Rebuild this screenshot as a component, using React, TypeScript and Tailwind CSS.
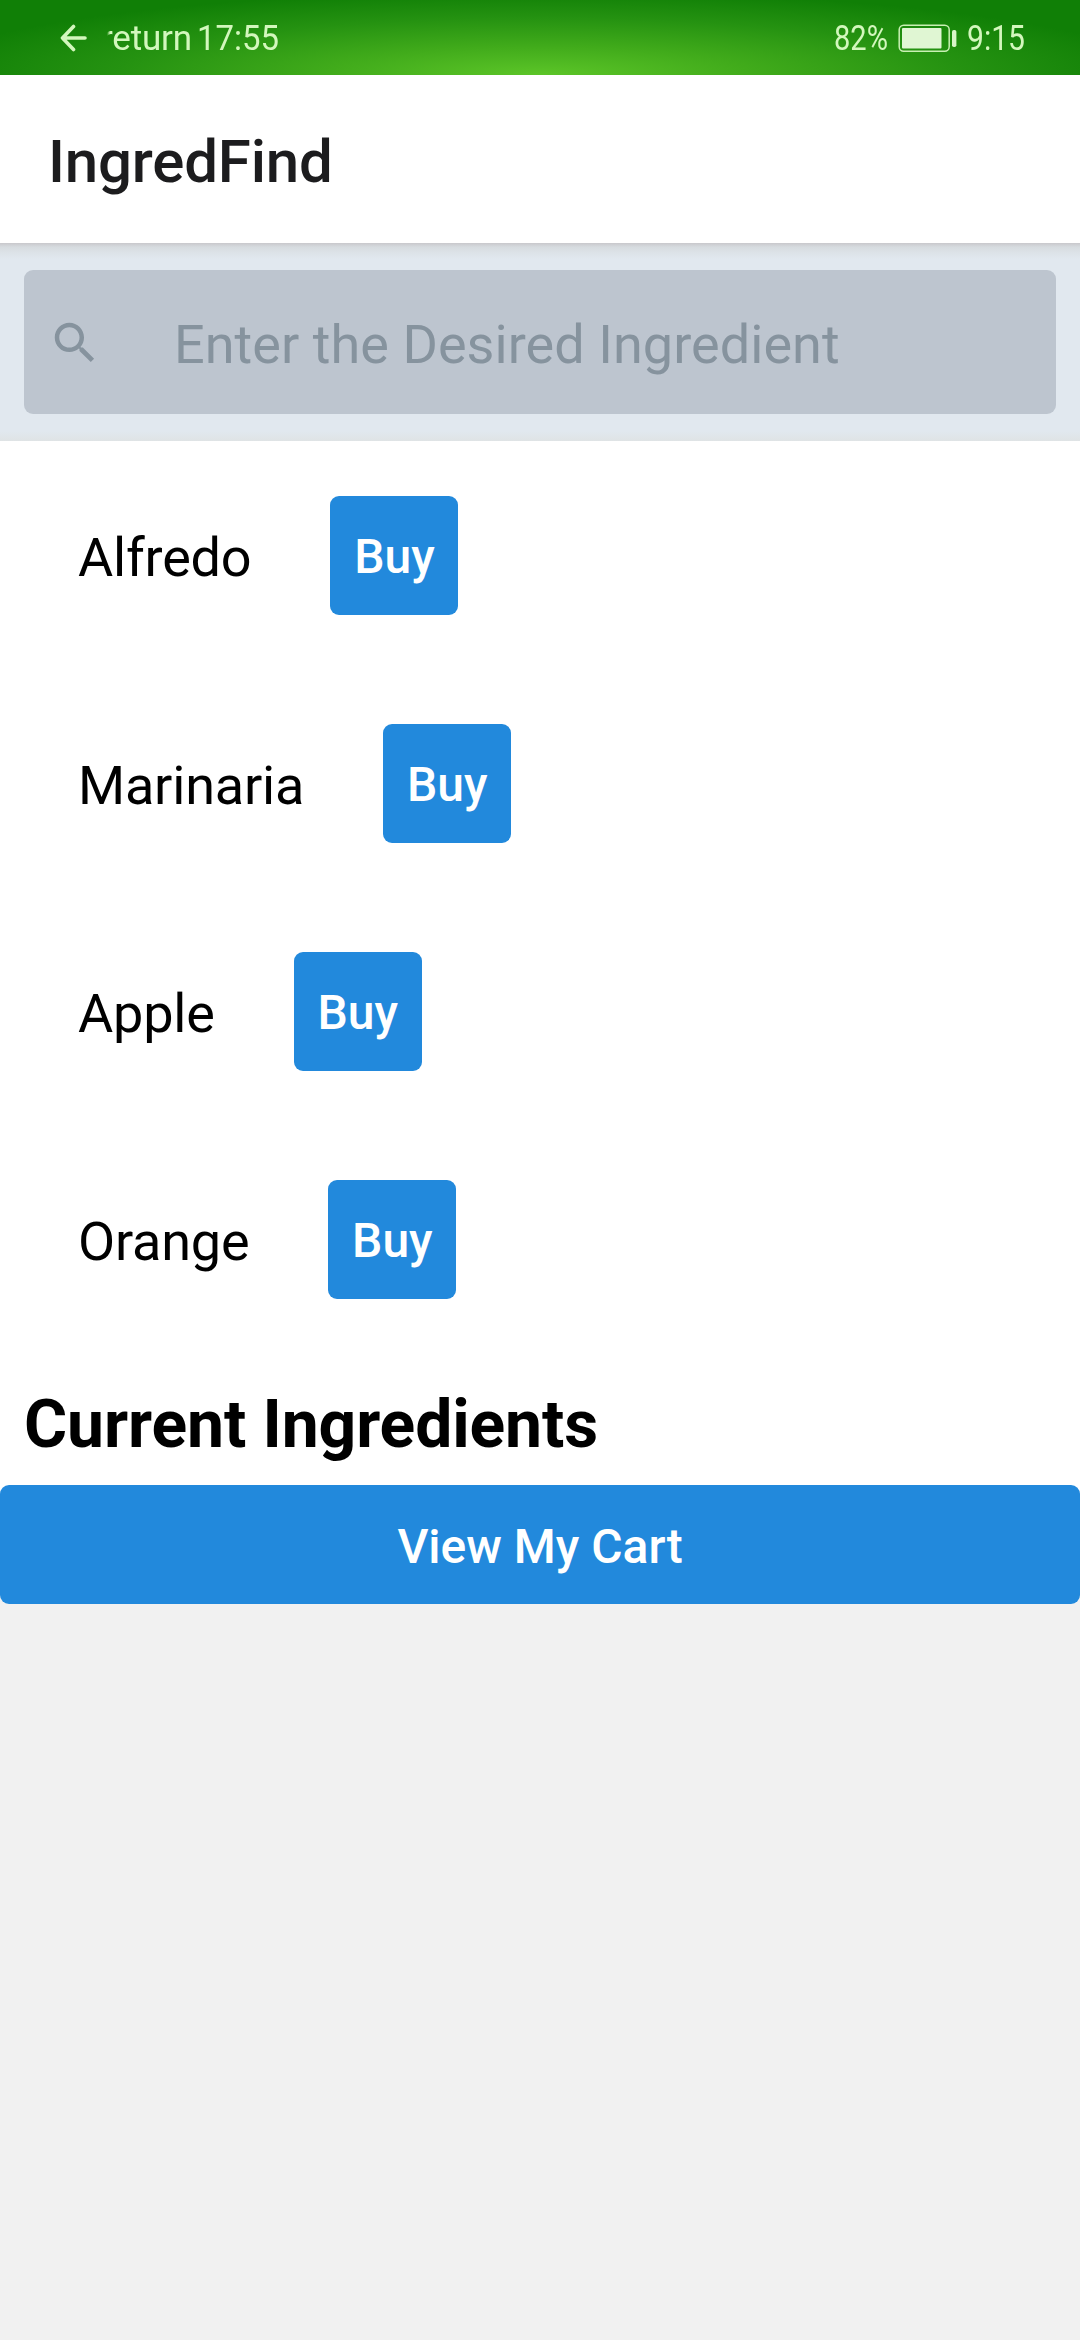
const ingredients = ["Alfredo", "Marinaria", "Apple", "Orange"];

function BatteryIcon() {
  return (
    <svg className="h-[30px] w-[60px] shrink-0" viewBox="0 0 60 30" fill="none">
      <rect x="1.2" y="2.2" width="50" height="26" rx="4.5" stroke="#c9f0b4" strokeWidth="1.5" />
      <rect x="4" y="5" width="39.5" height="20.5" rx="1" fill="#e0f6d3" />
      <rect x="54" y="7" width="4.4" height="17" rx="1.8" fill="#d8f5c8" />
    </svg>
  );
}

function StatusBar() {
  return (
    <div className="flex h-[75px] items-center bg-[radial-gradient(ellipse_620px_84px_at_50%_100%,#5cc528_0%,#41ab1b_34%,#259211_68%,#107f06_100%)] pl-[60px] text-[35px] leading-none text-[#d3f7bd]">
      <svg className="h-[28px] w-[28px] shrink-0" viewBox="0 0 28 28" fill="none">
        <path d="M13.5 2.5L2.5 14l11 11.5M2.5 14H25" stroke="#d3f7bd" strokeWidth="3.6" strokeLinecap="round" strokeLinejoin="round" />
      </svg>
      <span className="ml-[13px] block pt-[2px] tracking-[-0.2px] [mask-image:linear-gradient(to_right,transparent_6px,black_9px)]">
        return
      </span>
      <span className="ml-[5px] block w-[84px] origin-left scale-x-[0.94] pt-[2px] whitespace-nowrap">17:55</span>
      <div className="ml-auto flex items-center pr-[54px]">
        <span className="block w-[57px] origin-left scale-x-[0.83] pt-[2px] whitespace-nowrap">82%</span>
        <div className="ml-[7px]">
          <BatteryIcon />
        </div>
        <span className="ml-[9px] block w-[59px] origin-left scale-x-[0.86] pt-[2px] whitespace-nowrap">9:15</span>
      </div>
    </div>
  );
}

function SearchBar() {
  return (
    <div className="h-[198px] bg-[linear-gradient(#c8c8cc_0px,#d6dbdf_4px,#dce2e7_9px,#e1e8ef_16px,#e1e8ef_188px,#dfe3e5_198px)] px-6 py-[27px]">
      <div className="flex h-[144px] items-center rounded-[9px] bg-[#bdc5cf] pt-[2px] pl-[24px]">
        <svg className="h-[54px] w-[54px] shrink-0" viewBox="0 0 24 24" fill="#86939e">
          <path d="M15.5 14h-.79l-.28-.27C15.41 12.59 16 11.11 16 9.5 16 5.91 13.09 3 9.5 3S3 5.91 3 9.5 5.91 16 9.5 16c1.61 0 3.09-.59 4.23-1.57l.27.28v.79l5 4.99L20.49 19l-4.99-5zm-6 0C7.01 14 5 11.99 5 9.5S7.01 5 9.5 5 14 7.01 14 9.5 11.99 14 9.5 14z" />
        </svg>
        <span className="ml-[72px] pt-[3px] text-[54px] tracking-[0.05px] text-[#86939e]">Enter the Desired Ingredient</span>
      </div>
    </div>
  );
}

export default function App() {
  return (
    <div className="flex h-[2340px] w-[1080px] flex-col overflow-hidden bg-[#f1f1f1] font-['Roboto',sans-serif]">
      <StatusBar />

      {/* Header */}
      <header className="flex h-[168px] items-center bg-white px-12">
        <h1 className="pt-[5px] text-[60px] leading-none font-medium tracking-[-0.2px] text-[#1c1c1e]">IngredFind</h1>
      </header>

      <SearchBar />

      {/* Ingredient list */}
      <main className="bg-white">
        <ul>
          {ingredients.map((name) => (
            <li key={name} className="flex h-[228px] items-center pl-[78px]">
              <span className="pt-[6px] text-[54px] leading-none tracking-[-0.2px] text-black">{name}</span>
              <button className="ml-[79px] h-[119px] w-[128px] rounded-[9px] bg-[#2289dc] pt-[4px] text-[48px] font-medium text-white">
                Buy
              </button>
            </li>
          ))}
        </ul>

        <div className="flex h-[132px] items-center pt-[11px] pl-6">
          <h2 className="text-[66px] leading-none font-bold tracking-[-0.1px] text-black">Current Ingredients</h2>
        </div>
      </main>

      {/* white behind the rounded top corners, page grey behind the bottom ones */}
      <div className="bg-[linear-gradient(white_50%,#f1f1f1_50%)]">
        <button className="block h-[119px] w-full rounded-[9px] bg-[#2289dc] pt-[4px] text-[48px] font-medium text-white">
          View My Cart
        </button>
      </div>
    </div>
  );
}
